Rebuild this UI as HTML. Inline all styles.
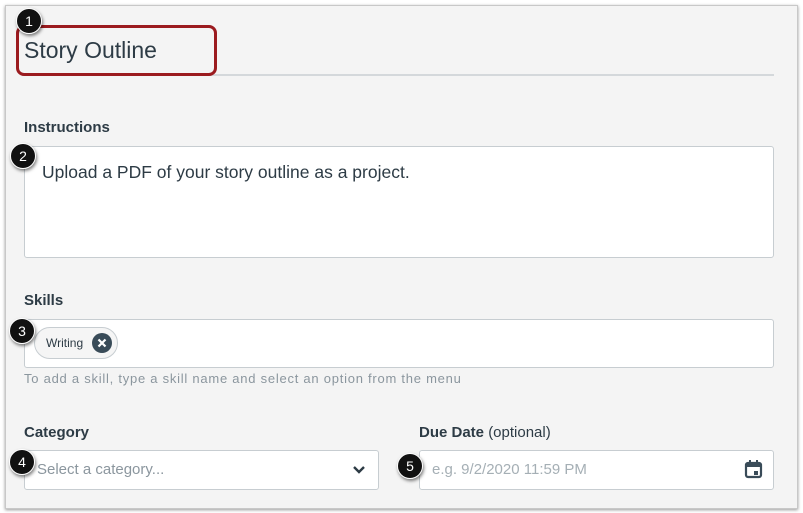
<!DOCTYPE html>
<html><head><style>
body{margin:0;width:803px;height:513px;background:#fff;font-family:"Liberation Sans",sans-serif;position:relative;overflow:hidden;color:#2d3b45}
.panel{position:absolute;left:5px;top:5px;width:791px;height:502px;background:#f4f4f4;border:1px solid #c8c8c8;box-shadow:0 1px 3px rgba(0,0,0,.4)}
.a{position:absolute}
.box{position:absolute;background:#fff;border:1px solid #c7cdd1;border-radius:3px;box-sizing:border-box}
.lbl{position:absolute;font-size:15px;font-weight:bold;color:#2d3b45}
.badge{position:absolute;width:26px;height:26px;border-radius:50%;background:#111;color:#fff;font-size:14px;text-align:center;line-height:25px;box-shadow:1px 2px 3px rgba(0,0,0,.5);border:1px solid #fff;box-sizing:border-box}
</style></head><body>
<div class="panel"></div>
<div class="a" style="left:24px;top:37px;font-size:23px;color:#2d3b45">Story Outline</div>
<div class="a" style="left:24px;top:74px;width:750px;height:2px;background:#d4d8db"></div>
<div class="a" style="left:16px;top:25px;width:201px;height:51px;border:3px solid #9b1b1f;border-radius:8px;box-sizing:border-box"></div>
<div class="lbl" style="left:24px;top:119px">Instructions</div>
<div class="box" style="left:24px;top:146px;width:750px;height:112px"></div>
<div class="a" style="left:42px;top:162px;font-size:17.5px">Upload a PDF of your story outline as a project.</div>
<div class="lbl" style="left:24px;top:292px">Skills</div>
<div class="box" style="left:24px;top:319px;width:750px;height:49px"></div>
<div class="a" style="left:34px;top:327px;width:84px;height:32px;border:1px solid #c7cdd1;border-radius:16px;background:#f5f5f5;box-sizing:border-box"></div>
<div class="a" style="left:46px;top:336px;font-size:12px">Writing</div>
<svg class="a" style="left:92px;top:333px" width="20" height="20"><circle cx="10" cy="10" r="10" fill="#394b58"/><path d="M6.5 6.5L13.5 13.5M13.5 6.5L6.5 13.5" stroke="#fff" stroke-width="2.2"/></svg>
<div class="a" style="left:24px;top:371px;font-size:13px;letter-spacing:0.75px;color:#8b969e">To add a skill, type a skill name and select an option from the menu</div>
<div class="lbl" style="left:24px;top:424px">Category</div>
<div class="box" style="left:24px;top:450px;width:355px;height:40px"></div>
<div class="a" style="left:37px;top:461px;font-size:15px;color:#8b969e">Select a category...</div>
<svg class="a" style="left:352px;top:465px" width="14" height="10"><path d="M2 2L7 7L12 2" stroke="#2d3b45" stroke-width="2.4" fill="none"/></svg>
<div class="lbl" style="left:419px;top:424px">Due Date <span style="font-weight:normal">(optional)</span></div>
<div class="box" style="left:419px;top:450px;width:355px;height:40px"></div>
<div class="a" style="left:432px;top:461px;font-size:15px;color:#a5afb5">e.g. 9/2/2020 11:59 PM</div>
<svg class="a" style="left:744px;top:459px" width="20" height="20"><rect x="2" y="4" width="15" height="14" rx="2" fill="none" stroke="#394b58" stroke-width="2.2"/><rect x="2" y="4" width="15" height="4" fill="#394b58"/><rect x="5" y="1" width="2" height="4" fill="#394b58"/><rect x="12" y="1" width="2" height="4" fill="#394b58"/><rect x="10" y="12" width="4" height="4" fill="#394b58"/></svg>
<div class="badge" style="left:16px;top:8px">1</div>
<div class="badge" style="left:10px;top:143px">2</div>
<div class="badge" style="left:9px;top:318px">3</div>
<div class="badge" style="left:9px;top:449px">4</div>
<div class="badge" style="left:397px;top:453px">5</div>
</body></html>
